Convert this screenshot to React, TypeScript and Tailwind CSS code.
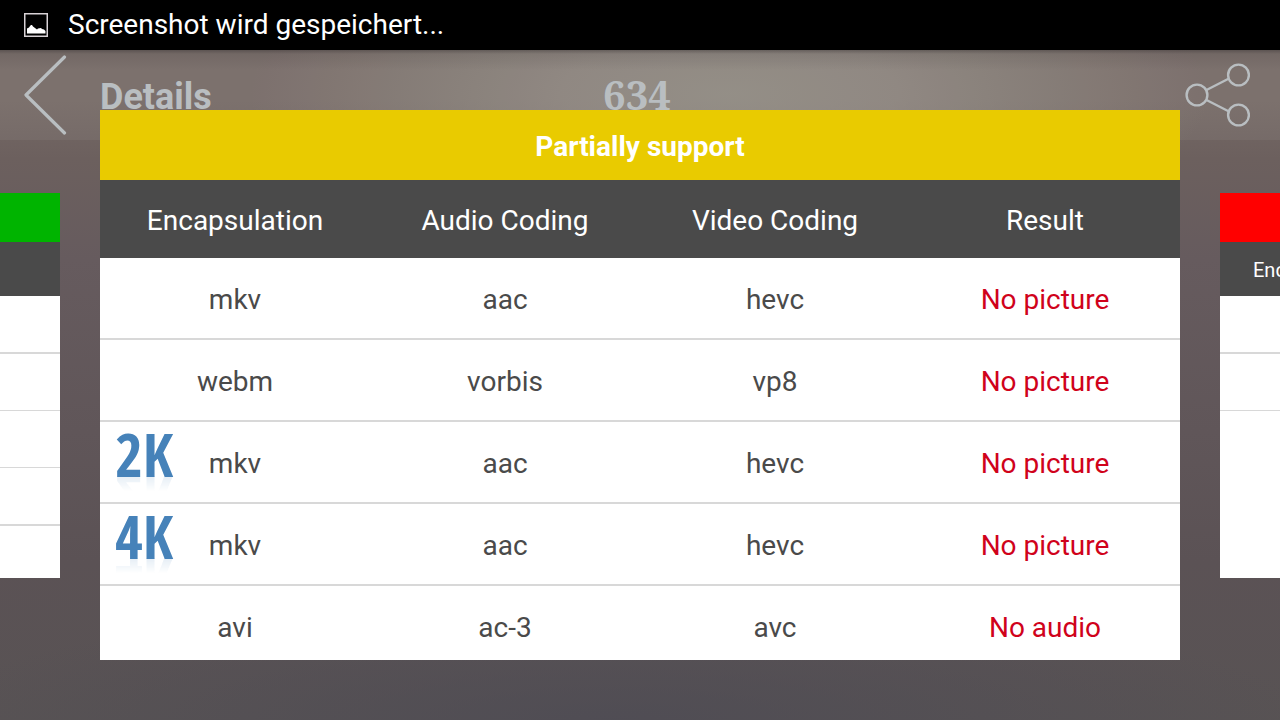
type TRow = {
   badge?: string;
   encapsulation: string;
   audio: string;
   video: string;
   result: string;
};

const columns = ["Encapsulation", "Audio Coding", "Video Coding", "Result"];

const rows: TRow[] = [
   { encapsulation: "mkv", audio: "aac", video: "hevc", result: "No picture" },
   { encapsulation: "webm", audio: "vorbis", video: "vp8", result: "No picture" },
   { badge: "2K", encapsulation: "mkv", audio: "aac", video: "hevc", result: "No picture" },
   { badge: "4K", encapsulation: "mkv", audio: "aac", video: "hevc", result: "No picture" },
   { encapsulation: "avi", audio: "ac-3", video: "avc", result: "No audio" },
];

const StatusBar = () => {
   return (
      <div className="flex h-[50px] shrink-0 items-center gap-5 bg-black px-6 text-[28px] text-white">
         <svg width="24" height="24" viewBox="0 0 24 24" aria-hidden="true">
            <rect x="0.75" y="0.75" width="22.5" height="22.5" fill="none" stroke="#d8d2d6" strokeWidth="1.5" />
            <path d="M3 20.500v-5l2-1 1-1.500 1-1h1l1 1.500 2 1.500 2 1.500 1-1 3-.5 1 1 2 .5 1.500 1.500v2.500z" fill="#fff" />
         </svg>
         <p>Screenshot wird gespeichert...</p>
      </div>
   );
};

const Header = () => {
   return (
      <header className="grid h-[90px] shrink-0 grid-cols-[1fr_auto_1fr] items-center bg-white/5 bg-[linear-gradient(rgba(60,54,54,0.5),rgba(60,54,54,0.15)_4px,transparent_20px)] pr-[30px] pl-6 text-[#b9bec1]">
         <div className="flex items-center gap-8">
            <button type="button" aria-label="Back">
               <svg width="44" height="80" viewBox="0 0 44 80" fill="none" stroke="currentColor" strokeWidth="3.2">
                  <path d="M40.500 2 2 40 40.500 78" strokeLinecap="round" strokeLinejoin="round" />
               </svg>
            </button>
            <h1 className="pt-1 text-4xl font-bold">Details</h1>
         </div>
         <span className="font-['Noto_Serif','Liberation_Serif',serif] text-[40px] leading-[48px] font-bold">
            634
         </span>
         <button type="button" aria-label="Share" className="justify-self-end">
            <svg width="66" height="64" viewBox="0 0 66 64" fill="none" stroke="currentColor" strokeWidth="2.4">
               <circle cx="13" cy="32" r="10.4" />
               <circle cx="54.500" cy="12" r="10.4" />
               <circle cx="54.500" cy="52" r="10.4" />
               <path d="M22.500 27 45 15.500M22.500 37 45 48.500" />
            </svg>
         </button>
      </header>
   );
};

const ResultTable = () => {
   return (
      <section className="min-w-0 flex-1 self-stretch overflow-hidden bg-white text-[28px]">
         <h2 className="flex h-[70px] items-center justify-center bg-[#e9cb00] pt-1 font-bold text-white">
            Partially support
         </h2>
         <table className="w-full table-fixed border-collapse text-center text-[#4a4a4a]">
            <thead className="bg-[#4a4a4a] text-white">
               <tr className="h-[78px]">
                  {columns.map((column) => (
                     <th key={column} className="p-0 pt-1 font-normal">
                        {column}
                     </th>
                  ))}
               </tr>
            </thead>
            <tbody>
               {rows.map((row, index) => (
                  <tr key={index} className="h-[82px] shadow-[inset_0_-2px_0_#d8d8d8]">
                     <td className="relative p-0 pt-0.5">
                        {row.badge && (
                           <span className="absolute top-[10px] left-[15px] font-['Open_Sans_Condensed','Liberation_Sans_Narrow',sans-serif] text-[60px] leading-[44px] font-bold text-[#4682b9] [-webkit-box-reflect:below_0px_linear-gradient(transparent_65%,rgba(0,0,0,0.14))]">
                              {row.badge}
                           </span>
                        )}
                        {row.encapsulation}
                     </td>
                     <td className="p-0 pt-0.5">{row.audio}</td>
                     <td className="p-0 pt-0.5">{row.video}</td>
                     <td className="p-0 pt-0.5 text-[#d0021b]">{row.result}</td>
                  </tr>
               ))}
            </tbody>
         </table>
      </section>
   );
};

type TSideCard = {
   titleClass: string;
   heading?: string;
   dividers: number;
};

// neighbour page of the carousel, only its edge is visible
const SideCard = ({ titleClass, heading, dividers }: TSideCard) => {
   return (
      <aside className="h-[70%] w-[60px] shrink-0 overflow-hidden bg-white">
         <div className={`h-[49px] ${titleClass}`} />
         <div className="flex h-[54px] items-center bg-[#4a4a4a] pt-0.5 pl-[33px] text-xl text-white">{heading}</div>
         <ul>
            {Array.from({ length: dividers }, (_, index) => (
               <li
                  key={index}
                  className="h-[57px] border-b border-[#d8d8d8] first:h-[58px] first:border-b-2 nth-[4]:h-[58px] nth-[4]:border-b-2"
               />
            ))}
         </ul>
      </aside>
   );
};

const App = () => {
   return (
      <div className="flex h-screen flex-col overflow-hidden bg-[radial-gradient(ellipse_480px_160px_at_57%_13%,rgba(150,147,138,0.75),rgba(152,147,138,0.6)_35%,transparent),radial-gradient(ellipse_700px_120px_at_48%_100%,rgba(76,74,84,0.7),transparent),linear-gradient(#756965_0%,#756965_14%,#6c605e_22%,#665b5e_36%,#605659_60%,#5b5255_78%,#585354_100%)] font-[Roboto,sans-serif]">
         <StatusBar />
         <Header />
         <main className="relative -mt-[30px] mb-[60px] flex min-h-0 flex-1 items-center gap-10">
            <SideCard titleClass="bg-[#00b400]" dividers={4} />
            <ResultTable />
            <SideCard titleClass="bg-[#ff0000]" heading="Encapsulation" dividers={2} />
         </main>
      </div>
   );
};

export default App;
